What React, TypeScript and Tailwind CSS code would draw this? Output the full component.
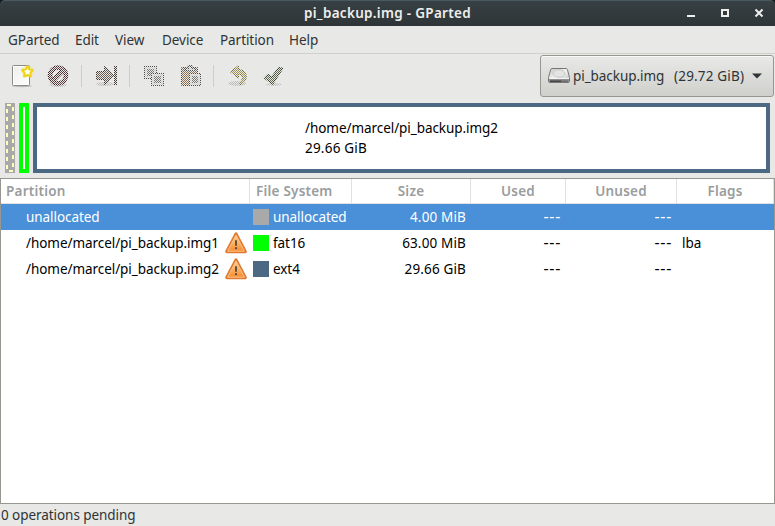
import type { ReactNode } from "react";

function ToolIcon({ id, disabled = true, children }: { id: string; disabled?: boolean; children: ReactNode }) {
  return (
    <svg width="24" height="24" viewBox="0 0 24 24" className="block shrink-0">
      <defs>
        <pattern id={`dots-${id}`} width="2" height="2" patternUnits="userSpaceOnUse">
          <path d="M0 0h1v1H0zM1 1h1v1H1z" fill="#fff" shapeRendering="crispEdges" />
        </pattern>
        <mask id={`mask-${id}`} maskUnits="userSpaceOnUse" x="0" y="0" width="24" height="24">
          <rect width="24" height="24" fill={`url(#dots-${id})`} />
        </mask>
      </defs>
      <g mask={disabled ? `url(#mask-${id})` : undefined}>{children}</g>
    </svg>
  );
}

function Separator() {
  return <div className="mr-3 ml-[11px] h-[22px] w-px shrink-0 bg-[#cdcdca]" />;
}

function Warning() {
  return (
    <svg width="22" height="22" viewBox="0 0 22 22" className="block shrink-0">
      <defs>
        <linearGradient id="warn" x1="0" y1="0" x2="0" y2="1">
          <stop offset="0" stopColor="#fbd09a" />
          <stop offset="0.5" stopColor="#fbb060" />
          <stop offset="1" stopColor="#f78b35" />
        </linearGradient>
      </defs>
      <path d="M11 2 L20.200 19.600 H1.800 Z" fill="#fff" stroke="#e07a30" strokeWidth="3.200" strokeLinejoin="round" />
      <path d="M11 3 L19.400 19.200 H2.600 Z" fill="url(#warn)" stroke="#fdc48a" strokeWidth="1" strokeLinejoin="round" />
      <path d="M11 9v4" stroke="#54483c" strokeWidth="1.800" strokeLinecap="round" />
      <circle cx="11" cy="16.200" r="1.100" fill="#54483c" />
    </svg>
  );
}

function DiskIcon() {
  return (
    <svg width="24" height="18" viewBox="0 0 24 18" className="block shrink-0">
      <defs>
        <linearGradient id="disk" x1="0" y1="0" x2="1" y2="1">
          <stop offset="0" stopColor="#c8c8c8" />
          <stop offset="0.5" stopColor="#f4f4f4" />
          <stop offset="1" stopColor="#b8b8b8" />
        </linearGradient>
      </defs>
      <path d="M5 1.500H19Q20 1.500 20.400 2.500L22.500 10.500V14Q22.500 15.500 21 15.500H3Q1.500 15.500 1.500 14V10.500L3.700 2.500Q4 1.500 5 1.500Z" fill="url(#disk)" stroke="#777" />
      <ellipse cx="12" cy="6.500" rx="6" ry="3.800" fill="#e4e4e4" stroke="#c0c0c0" strokeWidth="0.800" />
      <path d="M2 11.500H22V15H2Z" fill="#8f8f8f" />
      <path d="M2 11.500H22" stroke="#f4f4f4" />
      <path d="M3 14.200H14" stroke="#444" strokeWidth="1.500" />
      <path d="M14 14.200H21" stroke="#6e6e6e" strokeWidth="1.500" />
    </svg>
  );
}

const menus = [
  { label: "GParted", width: "w-[67px]" },
  { label: "Edit", width: "w-10" },
  { label: "View", width: "w-[47px]" },
  { label: "Device", width: "w-[58px]" },
  { label: "Partition", width: "w-[69px]" },
  { label: "Help", width: "w-10" },
];

const rows = [
  { name: "unallocated", warn: false, color: "bg-[#a9a9a9]", fs: "unallocated", size: "4.00 MiB", flags: "", selected: true },
  { name: "/home/marcel/pi_backup.img1", warn: true, color: "bg-[#00ff00]", fs: "fat16", size: "63.00 MiB", flags: "lba", selected: false },
  { name: "/home/marcel/pi_backup.img2", warn: true, color: "bg-[#4b6983]", fs: "ext4", size: "29.66 GiB", flags: "", selected: false },
];

const columns = "grid grid-cols-[249px_102px_119px_95px_111px_97px]";

export default function App() {
  return (
    <div className="flex h-[526px] w-[775px] flex-col overflow-hidden bg-[#e8e8e6] font-['Noto_Sans',sans-serif] text-[13.5px] leading-5 tracking-[-0.06px] whitespace-pre text-[#2e3436]">
      <div className="h-[26px] shrink-0 bg-[#121a1c]">
        <div className="grid h-[26px] grid-cols-[1fr_auto_1fr] items-center rounded-t-[5px] border-t border-[#4a5b5f] bg-linear-to-b from-[#374044] to-[#2f3537]">
          <div />
          <div className="pb-px text-[13.5px] font-semibold tracking-[0.3px] text-[#eeeeec]">pi_backup.img - GParted</div>
          <div className="flex justify-end pr-[11px] pb-px">
            <svg width="78" height="10" viewBox="0 0 78 10">
              <path d="M1 7h8v2H1z" fill="#eeeeec" />
              <path d="M36 2h6v6h-6z" fill="none" stroke="#eeeeec" strokeWidth="2" />
              <path d="M69.500 1.500l7 7M76.500 1.500l-7 7" stroke="#eeeeec" strokeWidth="2" />
            </svg>
          </div>
        </div>
      </div>

      <div className="flex h-7 shrink-0 items-center border-b border-[#cfcfcc] pl-2">
        {menus.map((m) => (
          <div key={m.label} className={m.width}>{m.label}</div>
        ))}
      </div>

      <div className="flex h-11 shrink-0 items-center pr-px pl-[10px]">
        <div className="mr-3">
          <ToolIcon id="new" disabled={false}>
            <defs>
              <linearGradient id="paper" x1="0" y1="0" x2="1" y2="1">
                <stop offset="0" stopColor="#ededeb" />
                <stop offset="1" stopColor="#fff" />
              </linearGradient>
            </defs>
            <ellipse cx="12" cy="22" rx="10" ry="1.200" fill="#bbb" />
            <rect x="2.500" y="1.500" width="17" height="20" rx="1" fill="url(#paper)" stroke="#8a8a87" />
            <rect x="3.500" y="2.500" width="15" height="18" fill="none" stroke="#fff" />
            <circle cx="17.500" cy="7.500" r="6" fill="#f5e76b" opacity="0.5" />
            <path d="M17.500 2.200l1.800 3.200 3.600.6-2.500 2.800.5 3.700-3.400-1.500-3.400 1.500.5-3.700-2.500-2.800 3.600-.6z" fill="#fffff0" stroke="#ecd420" strokeWidth="2" strokeLinejoin="round" />
          </ToolIcon>
        </div>
        <ToolIcon id="delete">
          <ellipse cx="12" cy="21" rx="9" ry="2" fill="#bbb" />
          <circle cx="12" cy="11.500" r="8" fill="none" stroke="#3a1d20" strokeWidth="4.600" />
          <path d="M6.500 17L17.500 6" stroke="#3a1d20" strokeWidth="4.600" />
          <circle cx="12" cy="11.500" r="8" fill="none" stroke="#6a4a4d" strokeWidth="2" />
          <path d="M6.500 17L17.500 6" stroke="#6a4a4d" strokeWidth="2" />
        </ToolIcon>
        <Separator />
        <ToolIcon id="resize">
          <ellipse cx="11" cy="20" rx="9" ry="2" fill="#bbb" />
          <path d="M2.500 7.500h8v-5L20 11.500 10.500 20.500v-5h-8z" fill="#665b51" stroke="#3d352e" />
          <rect x="20" y="2" width="3" height="19" fill="#443b34" />
        </ToolIcon>
        <Separator />
        <div className="mr-3">
          <ToolIcon id="copy">
            <path d="M2 2h13v13H2z" fill="#4c4c4c" />
            <path d="M3 3h11v11H3z" fill="#d0d0d0" />
            <path d="M5 5h7v7H5z" fill="#777" />
            <path d="M9 9h13v13H9z" fill="#4c4c4c" />
            <path d="M10 10h11v11H10z" fill="#d0d0d0" />
            <path d="M12 12h7v7h-7z" fill="#777" />
          </ToolIcon>
        </div>
        <ToolIcon id="paste">
          <rect x="3" y="3" width="17" height="19" rx="1" fill="#594733" />
          <rect x="4" y="4" width="15" height="17" fill="#8c7355" />
          <path d="M6 7V4h3l1-3h4l1 3h3v3z" fill="#505050" />
          <path d="M8 5h3V3h2v2h3v1H8z" fill="#ccc" />
          <path d="M11 9h12v13H11z" fill="#4c4c4c" />
          <path d="M12 10h10v11H12z" fill="#d0d0d0" />
          <path d="M14 12h6v7h-6z" fill="#777" />
        </ToolIcon>
        <Separator />
        <div className="mr-3">
          <ToolIcon id="undo">
            <ellipse cx="11" cy="19.500" rx="9" ry="2.500" fill="#bbb" />
            <path d="M12.500 1.500L4.500 8l8 6v-3.500c4.500 0 5.500 3 1.500 8v2.500c9-4 8-15-1.500-15.500z" fill="#9e9353" stroke="#6b602c" strokeLinejoin="round" />
          </ToolIcon>
        </div>
        <ToolIcon id="apply">
          <ellipse cx="12" cy="20.500" rx="8" ry="1.500" fill="#bbb" />
          <path d="M2.500 14l3.500-3.500 3.500 3L17 3.500l3.500 1L10.500 20z" fill="#5d6e50" stroke="#333f2a" strokeWidth="1.500" strokeLinejoin="round" />
        </ToolIcon>

        <button className="ml-auto flex h-[42px] w-[234px] items-center rounded-[3px] border border-[#979792] bg-linear-to-b from-[#e9e9e7] to-[#cfcfcc] pl-[6px] text-left shadow-[inset_0_1px_0_#fafafa]">
          <DiskIcon />
          <span className="ml-[2px] w-[101px]">pi_backup.img</span>
          <span className="w-[78px] tracking-[0.18px]">(29.72 GiB)</span>
          <svg width="10" height="6" viewBox="0 0 10 6"><path d="M0 0.500h10L5 5.500z" fill="#2e3436" /></svg>
        </button>
      </div>

      <div className="flex h-20 shrink-0 gap-1 p-[5px]">
        <svg width="10" height="70" viewBox="0 0 10 70" shapeRendering="crispEdges">
          <path d="M0 0h10v70H0z" fill="#a9a9a9" />
          <path d="M2 1h4v2H2zM4 67h4v2H4z" fill="#ffffc0" />
          <path d="M2 6V66" stroke="#ffffc0" strokeWidth="2" strokeDasharray="4 4" />
          <path d="M8 4V66" stroke="#ffffc0" strokeWidth="2" strokeDasharray="4 4" />
        </svg>
        <div className="w-[10px] border-4 border-[#00ff00] bg-white" />
        <div className="flex flex-1 items-center justify-center border-4 border-[#4b6983] bg-white text-black">
          <div>
            <div>/home/marcel/pi_backup.img2</div>
            <div className="tracking-[0.22px]">29.66 GiB</div>
          </div>
        </div>
      </div>

      <div className="h-[326px] shrink-0 border border-[#979792] bg-white text-black">
        <div className={`${columns} h-[25px] border-b border-[#e0e0df] font-semibold tracking-[0.22px] text-[#999d9d]`}>
          <div className="flex items-center border-r border-[#e0e0df] pl-[5px]">Partition</div>
          <div className="flex items-center border-r border-[#e0e0df] pl-[6px]">File System</div>
          <div className="flex items-center justify-center border-r border-[#e0e0df]">Size</div>
          <div className="flex items-center justify-center border-r border-[#e0e0df]">Used</div>
          <div className="flex items-center justify-center border-r border-[#e0e0df]">Unused</div>
          <div className="flex items-center justify-center border-r border-[#e0e0df]">Flags</div>
        </div>
        {rows.map((r) => (
          <div key={r.name} className={`${columns} h-[26px] items-center ${r.selected ? "bg-[#4a90d9] text-white" : ""}`}>
            <div className="flex items-center justify-between pr-[3px] pl-[25px]">
              <span>{r.name}</span>
              {r.warn && <Warning />}
            </div>
            <div className="flex items-center gap-1 pl-[3px]">
              <div className={`size-4 ${r.color}`} />
              <span>{r.fs}</span>
            </div>
            <div className="pr-[5px] text-right tracking-[0.15px]">{r.size}</div>
            <div className="pr-[5px] pb-0.5 text-right text-[16px] tracking-[0.7px]">---</div>
            <div className="pr-[5px] pb-0.5 text-right text-[16px] tracking-[0.7px]">---</div>
            <div className="pl-[5px]">{r.flags}</div>
          </div>
        ))}
      </div>

      <div className="flex flex-1 items-center pl-px">0 operations pending</div>
    </div>
  );
}
